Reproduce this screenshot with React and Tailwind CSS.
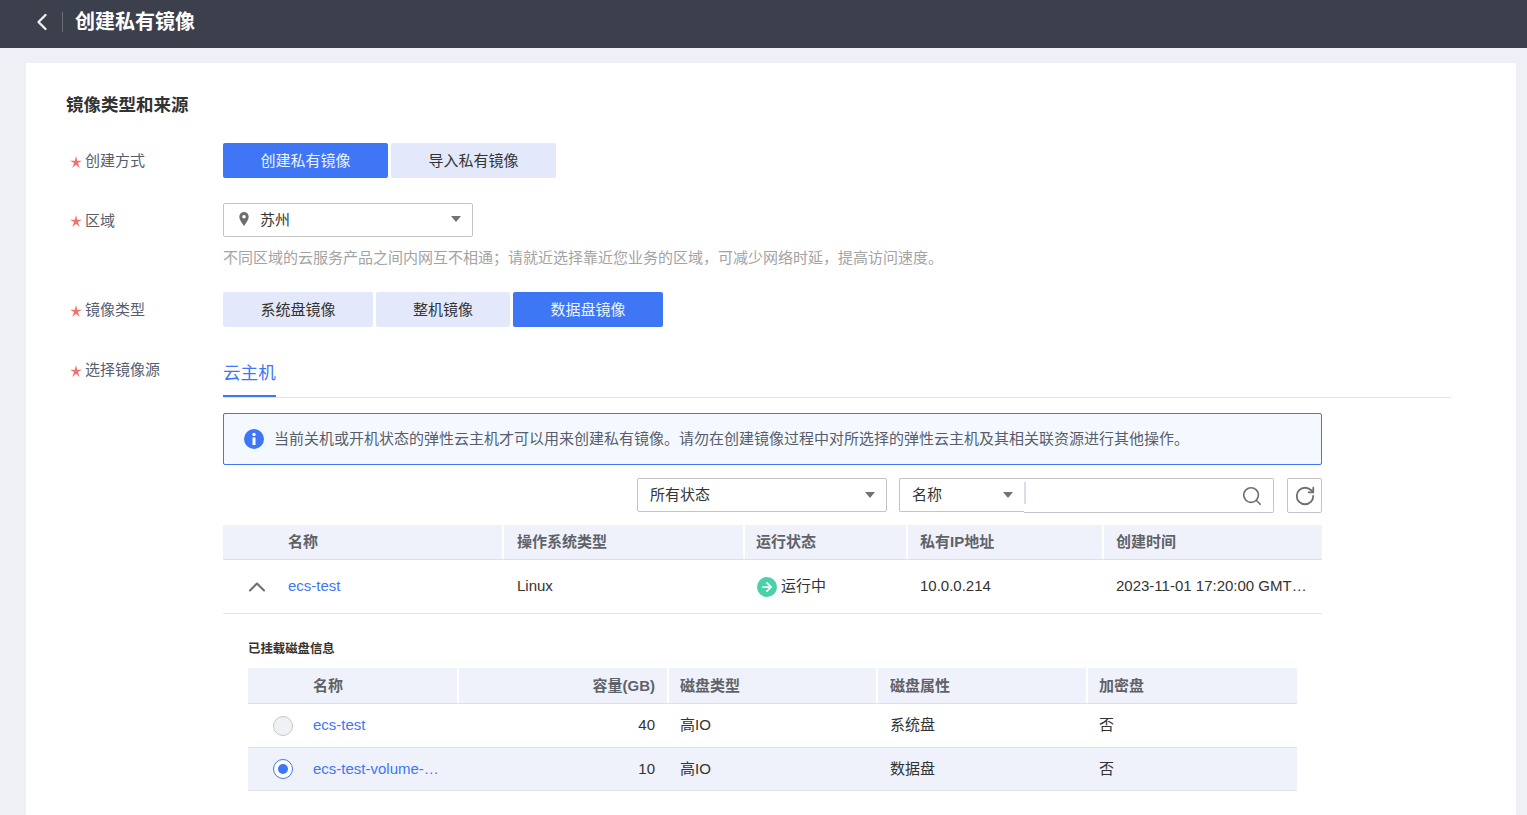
import React from "react";
import { ChevronLeft, ChevronUp, Search, RotateCw, ArrowRight } from "lucide-react";

const Caret = () => (
  <span className="w-0 h-0 border-x-[5px] border-x-transparent border-t-[6px] border-t-[#737373]" />
);

const Label = ({ className = "", children }) => (
  <div className={"w-[157px] shrink-0 flex items-center text-[15px] text-[#575d6c] pl-[4px] leading-[20px] " + className}>
    <svg viewBox="0 0 24 24" className="w-[12px] h-[12px] mr-[3px] mt-[2px] shrink-0">
      <polygon points="12,0 14.4,9.4 24,9.4 15.8,14.2 19.4,24 12,17.4 4.6,24 8.2,14.2 0,9.4 9.6,9.4" fill="#f66f6a" />
    </svg>
    <span className="mt-px">{children}</span>
  </div>
);

const Seg = ({ active, className, children }) => (
  <button
    className={
      "h-[35px] flex items-center justify-center text-[15px] rounded-[2px] pt-px " +
      (active ? "bg-[#3f76f5] text-[#eef4ff] " : "bg-[#e3e9fa] text-[#333] ") +
      className
    }
  >
    {children}
  </button>
);

const mainCols = "grid grid-cols-[280px_241px_163px_196px_219px]";
const mainHead = "grid grid-cols-[279px_241px_163px_196px_220px]";
const diskCols = "grid grid-cols-[210px_210px_209px_210px_210px]";
const diskHead = "grid grid-cols-[209px_210px_209px_210px_211px]";

const Th = ({ className, children }) => (
  <div className={"h-full flex items-center border-l-2 border-white first:border-l-0 font-bold text-[15px] text-[#5f6268] " + className}>
    {children}
  </div>
);

export default function App() {
  return (
    <div className="h-[815px] overflow-hidden bg-[#eef0f5] font-['Liberation_Sans','Noto_Sans_CJK_SC',sans-serif] text-[#333]">
      {/* 顶栏 */}
      <header className="h-[48px] bg-[#3c404d] flex items-center pl-[28px] text-white">
        <ChevronLeft className="w-[28px] h-[28px] text-[#f0f0f0] -mt-[5px] shrink-0" strokeWidth={2} />
        <div className="w-px h-[20px] bg-[#6b6e79] ml-[6px] mr-[12px] -mt-[4px]" />
        <h1 className="text-[20px] font-bold leading-[28px] -mt-[4px]">创建私有镜像</h1>
      </header>

      <main className="mt-[15px] ml-[26px] w-[1490px] h-[752px] bg-white pl-[40px] pt-[30px] overflow-hidden">
        <h2 className="text-[17.5px] font-bold leading-[24px] text-[#333]">镜像类型和来源</h2>

        {/* 创建方式 */}
        <div className="flex items-center mt-[26px]">
          <Label>创建方式</Label>
          <div className="flex gap-[3px]">
            <Seg active className="w-[165px]">创建私有镜像</Seg>
            <Seg className="w-[165px]">导入私有镜像</Seg>
          </div>
        </div>

        {/* 区域 */}
        <div className="flex items-center mt-[25px]">
          <Label>区域</Label>
          <div className="w-[250px] h-[34px] border border-[#c4c4c4] rounded-[2px] flex items-center pl-[14px] pr-[11px]">
            <svg viewBox="0 0 12 15" className="w-[12px] h-[14px] -mt-[2px] shrink-0">
              <path fillRule="evenodd" fill="#6e6e6e" d="M6 0a5 5 0 0 1 5 5c0 3.2-3.4 7.6-5 10C4.4 12.6 1 8.2 1 5a5 5 0 0 1 5-5zm0 3.2a1.9 1.9 0 1 0 0 3.8 1.9 1.9 0 0 0 0-3.8z" />
            </svg>
            <span className="ml-[10px] text-[15px] text-[#333]">苏州</span>
            <span className="ml-auto flex -mt-[2px]"><Caret /></span>
          </div>
        </div>
        <p className="ml-[157px] mt-[10px] text-[15px] leading-[22px] text-[#a3a3a3]">
          不同区域的云服务产品之间内网互不相通；请就近选择靠近您业务的区域，可减少网络时延，提高访问速度。
        </p>

        {/* 镜像类型 */}
        <div className="flex items-center mt-[23px]">
          <Label>镜像类型</Label>
          <div className="flex gap-[3px]">
            <Seg className="w-[150px]">系统盘镜像</Seg>
            <Seg className="w-[134px]">整机镜像</Seg>
            <Seg active className="w-[150px]">数据盘镜像</Seg>
          </div>
        </div>

        {/* 选择镜像源 */}
        <div className="flex items-start mt-[23px]">
          <Label className="mt-[9px]">选择镜像源</Label>
          <div className="w-[1228px]">
            <div className="h-[48px] border-b border-[#e3e4ea]">
              <div className="w-[53px] h-[47px] border-b-2 border-[#3f76f5] text-[#3f76f5] text-[17.6px] leading-[46px] whitespace-nowrap">
                云主机
              </div>
            </div>

            <div className="w-[1099px]">
              <div className="mt-[15px] h-[52px] border border-[#3f76f5] rounded-[2px] bg-[#f4f9ff] flex items-center pl-[20px] text-[15px] text-[#575d6c] whitespace-nowrap">
                <svg viewBox="0 0 20 20" className="w-[20px] h-[20px] shrink-0 mr-[10px]">
                  <circle cx="10" cy="10" r="10" fill="#3f76f5" />
                  <circle cx="10" cy="5.5" r="1.7" fill="#fff" />
                  <rect x="8.5" y="8.5" width="3" height="7.5" fill="#fff" />
                </svg>
                当前关机或开机状态的弹性云主机才可以用来创建私有镜像。请勿在创建镜像过程中对所选择的弹性云主机及其相关联资源进行其他操作。
              </div>

              {/* 筛选 */}
              <div className="flex justify-end mt-[13px] h-[35px] text-[15px] text-[#333]">
                <div className="w-[250px] h-[34px] border border-[#c4c4c4] rounded-[2px] flex items-center pl-[12px] pr-[11px] justify-between">
                  <span>所有状态</span>
                  <Caret />
                </div>
                <div className="ml-[12px] w-[375px] h-[35px] flex">
                  <div className="w-[125px] h-[34px] border border-r-0 border-[#c4c4c4] rounded-l-[2px] flex items-center justify-between pl-[12px] pr-[11px]">
                    <span>名称</span>
                    <Caret />
                  </div>
                  <div className="flex-1 border-y border-r border-[#c4c4c4] rounded-r-[2px] flex items-center justify-between pr-[10px]">
                    <div className="w-[2px] h-[22px] bg-[#d9deec] -mt-[6px]" />
                    <Search className="w-[22px] h-[22px] text-[#6f6f6f]" strokeWidth={1.8} />
                  </div>
                </div>
                <button className="ml-[13px] w-[35px] h-[35px] border border-[#c4c4c4] rounded-[2px] flex items-center justify-center">
                  <RotateCw className="w-[22px] h-[22px] text-[#6f6f6f]" strokeWidth={2} />
                </button>
              </div>

              {/* 云主机表格 */}
              <div className={mainHead + " mt-[12px] h-[35px] bg-[#eff2fb] border-b border-[#dfe1e8]"}>
                <Th className="pl-[65px]">名称</Th>
                <Th className="pl-[13px]">操作系统类型</Th>
                <Th className="pl-[11px]">运行状态</Th>
                <Th className="pl-[12px]">私有IP地址</Th>
                <Th className="pl-[12px]">创建时间</Th>
              </div>
              <div className={mainCols + " h-[54px] items-center border-b border-[#e3e4ea] text-[15px] text-[#333]"}>
                <div className="flex items-center pl-[20px]">
                  <ChevronUp className="w-[28px] h-[28px] text-[#6f6f6f] shrink-0" strokeWidth={1.8} />
                  <span className="ml-[17px] text-[#3f76f5]">ecs-test</span>
                </div>
                <div className="pl-[14px]">Linux</div>
                <div className="pl-[13px] flex items-center">
                  <span className="w-[20px] h-[20px] rounded-full bg-[#4bd1a7] flex items-center justify-center">
                    <ArrowRight className="w-[14px] h-[14px] text-white" strokeWidth={3} />
                  </span>
                  <span className="ml-[4px]">运行中</span>
                </div>
                <div className="pl-[13px]">10.0.0.214</div>
                <div className="pl-[13px] pr-[15px] truncate">2023-11-01 17:20:00 GMT+08:00</div>
              </div>

              {/* 已挂载磁盘 */}
              <div className="px-[25px]">
                <h3 className="mt-[27px] text-[12.4px] font-bold leading-[16px] text-[#333]">已挂载磁盘信息</h3>
                <div className={diskHead + " mt-[11px] h-[36px] bg-[#eff2fb] border-b border-[#dfe1e8]"}>
                  <Th className="pl-[65px] pt-px">名称</Th>
                  <Th className="justify-end pr-[12px] pt-px">容量(GB)</Th>
                  <Th className="pl-[11px] pt-px">磁盘类型</Th>
                  <Th className="pl-[12px] pt-px">磁盘属性</Th>
                  <Th className="pl-[11px] pt-px">加密盘</Th>
                </div>
                <div className={diskCols + " h-[44px] items-center border-b border-[#dfe1e8] text-[15px] text-[#333]"}>
                  <div className="flex items-center pl-[25px]">
                    <span className="w-[20px] h-[20px] rounded-full border border-[#c8c8c8] bg-[#f0f1f5]" />
                    <span className="ml-[20px] text-[#3f76f5]">ecs-test</span>
                  </div>
                  <div className="text-right pr-[13px]">40</div>
                  <div className="pl-[12px]">高IO</div>
                  <div className="pl-[13px]">系统盘</div>
                  <div className="pl-[12px]">否</div>
                </div>
                <div className={diskCols + " h-[43px] items-center bg-[#eff2fb] border-b border-[#dfe1e8] text-[15px] text-[#333]"}>
                  <div className="flex items-center pl-[25px]">
                    <span className="w-[20px] h-[20px] shrink-0 rounded-full border border-[#3f76f5] bg-white flex items-center justify-center">
                      <span className="w-[10px] h-[10px] rounded-full bg-[#3f76f5]" />
                    </span>
                    <span className="ml-[20px] w-[127px] truncate text-[#3f76f5]">ecs-test-volume-0001</span>
                  </div>
                  <div className="text-right pr-[13px]">10</div>
                  <div className="pl-[12px]">高IO</div>
                  <div className="pl-[13px]">数据盘</div>
                  <div className="pl-[12px]">否</div>
                </div>
              </div>
            </div>
          </div>
        </div>
      </main>
    </div>
  );
}
